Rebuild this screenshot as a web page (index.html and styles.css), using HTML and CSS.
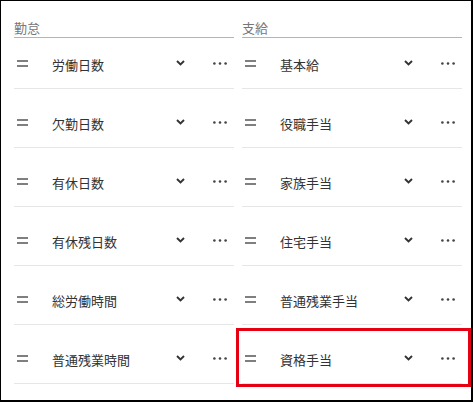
FILE: index.html
```html
<!DOCTYPE html>
<html lang="ja">
<head>
<meta charset="utf-8">
<link rel="stylesheet" href="styles.css">
</head>
<body>
<div class="frame">
  <div class="cols">
    <section class="col">
      <h2 class="col-title">勤怠</h2>
      <ul class="list">
        <li class="item"><svg class="grip" width="11" height="7" viewBox="0 0 11 7"><path d="M0 1h11M0 6h11" stroke="#555" stroke-width="1.3"/></svg><span class="label">労働日数</span><svg class="chev" width="9" height="6" viewBox="0 0 9 6"><path d="M1 1l3.5 3.5L8 1" fill="none" stroke="#333" stroke-width="1.9"/></svg><svg class="dots" width="14" height="3" viewBox="0 0 14 3"><circle cx="1.4" cy="1.5" r="1.3" fill="#444"/><circle cx="7" cy="1.5" r="1.3" fill="#444"/><circle cx="12.6" cy="1.5" r="1.3" fill="#444"/></svg></li>
        <li class="item"><svg class="grip" width="11" height="7" viewBox="0 0 11 7"><path d="M0 1h11M0 6h11" stroke="#555" stroke-width="1.3"/></svg><span class="label">欠勤日数</span><svg class="chev" width="9" height="6" viewBox="0 0 9 6"><path d="M1 1l3.5 3.5L8 1" fill="none" stroke="#333" stroke-width="1.9"/></svg><svg class="dots" width="14" height="3" viewBox="0 0 14 3"><circle cx="1.4" cy="1.5" r="1.3" fill="#444"/><circle cx="7" cy="1.5" r="1.3" fill="#444"/><circle cx="12.6" cy="1.5" r="1.3" fill="#444"/></svg></li>
        <li class="item"><svg class="grip" width="11" height="7" viewBox="0 0 11 7"><path d="M0 1h11M0 6h11" stroke="#555" stroke-width="1.3"/></svg><span class="label">有休日数</span><svg class="chev" width="9" height="6" viewBox="0 0 9 6"><path d="M1 1l3.5 3.5L8 1" fill="none" stroke="#333" stroke-width="1.9"/></svg><svg class="dots" width="14" height="3" viewBox="0 0 14 3"><circle cx="1.4" cy="1.5" r="1.3" fill="#444"/><circle cx="7" cy="1.5" r="1.3" fill="#444"/><circle cx="12.6" cy="1.5" r="1.3" fill="#444"/></svg></li>
        <li class="item"><svg class="grip" width="11" height="7" viewBox="0 0 11 7"><path d="M0 1h11M0 6h11" stroke="#555" stroke-width="1.3"/></svg><span class="label">有休残日数</span><svg class="chev" width="9" height="6" viewBox="0 0 9 6"><path d="M1 1l3.5 3.5L8 1" fill="none" stroke="#333" stroke-width="1.9"/></svg><svg class="dots" width="14" height="3" viewBox="0 0 14 3"><circle cx="1.4" cy="1.5" r="1.3" fill="#444"/><circle cx="7" cy="1.5" r="1.3" fill="#444"/><circle cx="12.6" cy="1.5" r="1.3" fill="#444"/></svg></li>
        <li class="item"><svg class="grip" width="11" height="7" viewBox="0 0 11 7"><path d="M0 1h11M0 6h11" stroke="#555" stroke-width="1.3"/></svg><span class="label">総労働時間</span><svg class="chev" width="9" height="6" viewBox="0 0 9 6"><path d="M1 1l3.5 3.5L8 1" fill="none" stroke="#333" stroke-width="1.9"/></svg><svg class="dots" width="14" height="3" viewBox="0 0 14 3"><circle cx="1.4" cy="1.5" r="1.3" fill="#444"/><circle cx="7" cy="1.5" r="1.3" fill="#444"/><circle cx="12.6" cy="1.5" r="1.3" fill="#444"/></svg></li>
        <li class="item"><svg class="grip" width="11" height="7" viewBox="0 0 11 7"><path d="M0 1h11M0 6h11" stroke="#555" stroke-width="1.3"/></svg><span class="label">普通残業時間</span><svg class="chev" width="9" height="6" viewBox="0 0 9 6"><path d="M1 1l3.5 3.5L8 1" fill="none" stroke="#333" stroke-width="1.9"/></svg><svg class="dots" width="14" height="3" viewBox="0 0 14 3"><circle cx="1.4" cy="1.5" r="1.3" fill="#444"/><circle cx="7" cy="1.5" r="1.3" fill="#444"/><circle cx="12.6" cy="1.5" r="1.3" fill="#444"/></svg></li>
      </ul>
    </section>
    <section class="col">
      <h2 class="col-title">支給</h2>
      <ul class="list">
        <li class="item"><svg class="grip" width="11" height="7" viewBox="0 0 11 7"><path d="M0 1h11M0 6h11" stroke="#555" stroke-width="1.3"/></svg><span class="label">基本給</span><svg class="chev" width="9" height="6" viewBox="0 0 9 6"><path d="M1 1l3.5 3.5L8 1" fill="none" stroke="#333" stroke-width="1.9"/></svg><svg class="dots" width="14" height="3" viewBox="0 0 14 3"><circle cx="1.4" cy="1.5" r="1.3" fill="#444"/><circle cx="7" cy="1.5" r="1.3" fill="#444"/><circle cx="12.6" cy="1.5" r="1.3" fill="#444"/></svg></li>
        <li class="item"><svg class="grip" width="11" height="7" viewBox="0 0 11 7"><path d="M0 1h11M0 6h11" stroke="#555" stroke-width="1.3"/></svg><span class="label">役職手当</span><svg class="chev" width="9" height="6" viewBox="0 0 9 6"><path d="M1 1l3.5 3.5L8 1" fill="none" stroke="#333" stroke-width="1.9"/></svg><svg class="dots" width="14" height="3" viewBox="0 0 14 3"><circle cx="1.4" cy="1.5" r="1.3" fill="#444"/><circle cx="7" cy="1.5" r="1.3" fill="#444"/><circle cx="12.6" cy="1.5" r="1.3" fill="#444"/></svg></li>
        <li class="item"><svg class="grip" width="11" height="7" viewBox="0 0 11 7"><path d="M0 1h11M0 6h11" stroke="#555" stroke-width="1.3"/></svg><span class="label">家族手当</span><svg class="chev" width="9" height="6" viewBox="0 0 9 6"><path d="M1 1l3.5 3.5L8 1" fill="none" stroke="#333" stroke-width="1.9"/></svg><svg class="dots" width="14" height="3" viewBox="0 0 14 3"><circle cx="1.4" cy="1.5" r="1.3" fill="#444"/><circle cx="7" cy="1.5" r="1.3" fill="#444"/><circle cx="12.6" cy="1.5" r="1.3" fill="#444"/></svg></li>
        <li class="item"><svg class="grip" width="11" height="7" viewBox="0 0 11 7"><path d="M0 1h11M0 6h11" stroke="#555" stroke-width="1.3"/></svg><span class="label">住宅手当</span><svg class="chev" width="9" height="6" viewBox="0 0 9 6"><path d="M1 1l3.5 3.5L8 1" fill="none" stroke="#333" stroke-width="1.9"/></svg><svg class="dots" width="14" height="3" viewBox="0 0 14 3"><circle cx="1.4" cy="1.5" r="1.3" fill="#444"/><circle cx="7" cy="1.5" r="1.3" fill="#444"/><circle cx="12.6" cy="1.5" r="1.3" fill="#444"/></svg></li>
        <li class="item"><svg class="grip" width="11" height="7" viewBox="0 0 11 7"><path d="M0 1h11M0 6h11" stroke="#555" stroke-width="1.3"/></svg><span class="label">普通残業手当</span><svg class="chev" width="9" height="6" viewBox="0 0 9 6"><path d="M1 1l3.5 3.5L8 1" fill="none" stroke="#333" stroke-width="1.9"/></svg><svg class="dots" width="14" height="3" viewBox="0 0 14 3"><circle cx="1.4" cy="1.5" r="1.3" fill="#444"/><circle cx="7" cy="1.5" r="1.3" fill="#444"/><circle cx="12.6" cy="1.5" r="1.3" fill="#444"/></svg></li>
        <li class="item"><svg class="grip" width="11" height="7" viewBox="0 0 11 7"><path d="M0 1h11M0 6h11" stroke="#555" stroke-width="1.3"/></svg><span class="label">資格手当</span><svg class="chev" width="9" height="6" viewBox="0 0 9 6"><path d="M1 1l3.5 3.5L8 1" fill="none" stroke="#333" stroke-width="1.9"/></svg><svg class="dots" width="14" height="3" viewBox="0 0 14 3"><circle cx="1.4" cy="1.5" r="1.3" fill="#444"/><circle cx="7" cy="1.5" r="1.3" fill="#444"/><circle cx="12.6" cy="1.5" r="1.3" fill="#444"/></svg></li>
      </ul>
    </section>
  </div>
  <div class="highlight"></div>
</div>
</body>
</html>
```

FILE: styles.css
```css
* { box-sizing: border-box; }
html, body { margin: 0; padding: 0; background: #fff; }
body {
  font-family: "Noto Sans CJK JP", "Noto Sans", sans-serif;
  color: #333;
}
.frame {
  position: relative;
  width: 473px;
  height: 402px;
  border-left: 1px solid #000;
  border-top: 1px solid #000;
  border-right: 2px solid #000;
  border-bottom: 2px solid #000;
  overflow: hidden;
}
.cols {
  display: grid;
  grid-template-columns: 220px 220px;
  column-gap: 8px;
  padding-left: 13px;
}
.col-title {
  margin: 0;
  padding-top: 19px;
  height: 37px;
  font-size: 13px;
  line-height: 16px;
  font-weight: 400;
  color: #777;
  border-bottom: 1px solid #b4b4b4;
}
.list {
  list-style: none;
  margin: 0;
  padding: 0;
  display: flex;
  flex-direction: column;
  gap: 8px;
}
.item {
  display: flex;
  align-items: center;
  height: 51px;
  border-bottom: 1px solid #e6e6e6;
  font-size: 13px;
}
.grip { margin-left: 3px; margin-right: 24px; flex: none; }
.label { flex: 1; padding-top: 2px; color: #333; }
.chev { flex: none; margin-right: 28px; }
.dots { flex: none; margin-right: 7px; }
.highlight {
  position: absolute;
  left: 235px;
  top: 327px;
  width: 235px;
  height: 59px;
  border: 3px solid #e60012;
}
```
